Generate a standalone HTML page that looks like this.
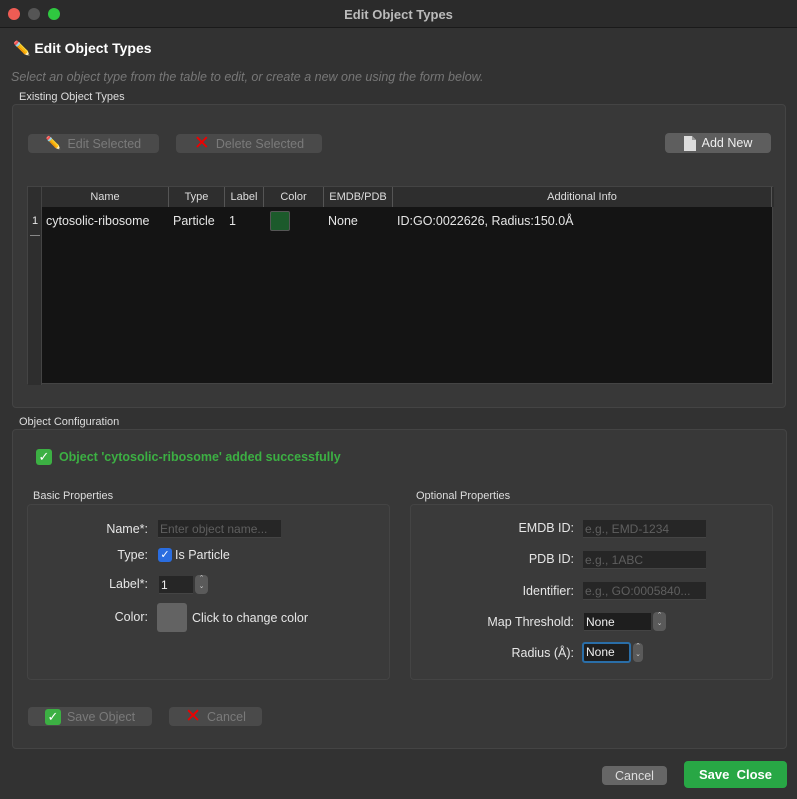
<!DOCTYPE html>
<html><head><meta charset="utf-8"><style>
*{box-sizing:border-box;margin:0;padding:0}
body{width:797px;height:799px;background:#323232;font-family:"Liberation Sans","DejaVu Sans",sans-serif;color:#e6e6e6;position:relative;overflow:hidden;font-size:12px}
.a{position:absolute}
.btn{position:absolute;background:#4a4a4a;border-radius:4px;color:#7a7a7a;font-size:12.5px;display:flex;align-items:center;justify-content:center;gap:6px}
.grp{position:absolute;background:#383838;border:1px solid #444;border-radius:4px}
.lbl{position:absolute;font-size:11px;color:#ddd}
.r{position:absolute;text-align:right;font-size:12.5px;color:#e6e6e6}
.in{position:absolute;background:#262626;border-bottom:1px solid #444;color:#5f5f5f;font-size:12px;padding-left:2px;line-height:18px;overflow:hidden;white-space:nowrap}
.sp{position:absolute;background:#5a5a5a;border-radius:4px;width:13px;height:19px;color:#ccc;font-size:7px;text-align:center;line-height:8px}
.th{position:absolute;top:0;height:20px;line-height:20px;text-align:center;font-size:11px;color:#ddd;border-right:1px solid #555}
.x{color:#e00;font-weight:bold;font-size:19px;line-height:14px}
.ck{display:inline-block;width:16px;height:16px;background:#3cb043;border-radius:3px;color:#fff;font-size:13px;line-height:16px;text-align:center;font-weight:bold}
</style></head><body>
<div class="a" style="left:0;top:0;width:797px;height:28px;background:#2b2b2b;border-bottom:1px solid #1a1a1a"></div>
<div class="a" style="left:8px;top:8px;width:12px;height:12px;border-radius:50%;background:#ee5c54"></div>
<div class="a" style="left:28px;top:8px;width:12px;height:12px;border-radius:50%;background:#555"></div>
<div class="a" style="left:48px;top:8px;width:12px;height:12px;border-radius:50%;background:#2fc840"></div>
<div class="a" style="left:0;width:797px;top:7px;text-align:center;font-size:13px;font-weight:bold;color:#bbb">Edit Object Types</div>
<div class="a" style="left:13px;top:40px;font-size:14px;font-weight:bold;color:#fff">✏️ Edit Object Types</div>
<div class="a" style="left:11px;top:70px;font-size:12.5px;font-style:italic;color:#777">Select an object type from the table to edit, or create a new one using the form below.</div>
<div class="lbl" style="left:19px;top:91px">Existing Object Types</div>
<div class="grp" style="left:12px;top:104px;width:774px;height:304px"></div>
<div class="btn" style="left:28px;top:134px;width:131px;height:19px"><span style="color:#c9a">✏️</span>Edit Selected</div>
<div class="btn" style="left:176px;top:134px;width:146px;height:19px"><span class="x">✕</span>Delete Selected</div>
<div class="btn" style="left:665px;top:133px;width:106px;height:20px;background:#5e5e5e;color:#eee"><svg width="12" height="15" viewBox="0 0 12 15"><path d="M0 0H8L12 4V15H0Z" fill="#ddd"/><path d="M8 0V4H12" fill="#999"/></svg>Add New</div>
<div class="a" style="left:27px;top:186px;width:746px;height:198px;background:#141414;border:1px solid #444">
 <div class="a" style="left:0;top:0;width:746px;height:20px;background:#2e2e2e"></div>
 <div class="a" style="left:0;top:0;width:14px;height:198px;background:#2e2e2e;border-right:1px solid #444"></div>
 <div class="th" style="left:14px;width:127px">Name</div>
 <div class="th" style="left:141px;width:56px">Type</div>
 <div class="th" style="left:197px;width:39px">Label</div>
 <div class="th" style="left:236px;width:60px">Color</div>
 <div class="th" style="left:296px;width:69px">EMDB/PDB</div>
 <div class="th" style="left:365px;width:379px">Additional Info</div>
 <div class="a" style="left:4px;top:28px;font-size:11px">1</div>
 <div class="a" style="left:2px;top:48px;width:10px;height:1px;background:#888"></div>
 <div class="a" style="left:18px;top:27px;font-size:12.5px">cytosolic-ribosome</div>
 <div class="a" style="left:145px;top:27px;font-size:12.5px">Particle</div>
 <div class="a" style="left:201px;top:27px;font-size:12.5px">1</div>
 <div class="a" style="left:242px;top:24px;width:20px;height:20px;background:#1c5a2b;border:1px solid #555;border-radius:2px"></div>
 <div class="a" style="left:300px;top:27px;font-size:12.5px">None</div>
 <div class="a" style="left:369px;top:27px;font-size:12.5px">ID:GO:0022626, Radius:150.0Å</div>
</div>
<div class="lbl" style="left:19px;top:416px">Object Configuration</div>
<div class="grp" style="left:12px;top:429px;width:775px;height:320px"></div>
<div class="a" style="left:36px;top:449px;font-size:12.5px;font-weight:bold;color:#3cb043"><span class="ck">✓</span>&nbsp; Object 'cytosolic-ribosome' added successfully</div>
<div class="lbl" style="left:33px;top:490px">Basic Properties</div>
<div class="grp" style="left:27px;top:504px;width:363px;height:176px;background:#3a3a3a"></div>
<div class="r" style="left:60px;width:88px;top:522px">Name*:</div>
<div class="in" style="left:158px;top:520px;width:123px;height:18px">Enter object name...</div>
<div class="r" style="left:60px;width:88px;top:548px">Type:</div>
<div class="a" style="left:158px;top:548px;width:14px;height:14px;background:#2a6de0;border-radius:3px;color:#fff;font-size:11px;text-align:center;line-height:14px">✓</div>
<div class="a" style="left:175px;top:548px;font-size:12.5px">Is Particle</div>
<div class="r" style="left:60px;width:88px;top:577px">Label*:</div>
<div class="in" style="left:159px;top:576px;width:34px;height:18px;color:#eee">1</div>
<div class="sp" style="left:195px;top:575px">⌃<br>⌄</div>
<div class="r" style="left:60px;width:88px;top:610px">Color:</div>
<div class="a" style="left:157px;top:603px;width:30px;height:29px;background:#636363;border-radius:3px"></div>
<div class="a" style="left:192px;top:611px;font-size:12.5px">Click to change color</div>
<div class="lbl" style="left:416px;top:490px">Optional Properties</div>
<div class="grp" style="left:410px;top:504px;width:363px;height:176px;background:#3a3a3a"></div>
<div class="r" style="left:450px;width:124px;top:521px">EMDB ID:</div>
<div class="in" style="left:583px;top:520px;width:123px;height:18px">e.g., EMD-1234</div>
<div class="r" style="left:450px;width:124px;top:552px">PDB ID:</div>
<div class="in" style="left:583px;top:551px;width:123px;height:18px">e.g., 1ABC</div>
<div class="r" style="left:450px;width:124px;top:584px">Identifier:</div>
<div class="in" style="left:583px;top:582px;width:123px;height:18px">e.g., GO:0005840...</div>
<div class="r" style="left:450px;width:124px;top:615px">Map Threshold:</div>
<div class="in" style="left:584px;top:613px;width:67px;height:18px;color:#eee;background:#1e1e1e">None</div>
<div class="sp" style="left:653px;top:612px">⌃<br>⌄</div>
<div class="r" style="left:450px;width:124px;top:646px">Radius (Å):</div>
<div class="in" style="left:582px;top:642px;width:49px;height:21px;color:#eee;background:#1e1e1e;border:2px solid #2a6ea8;border-radius:3px;line-height:17px">None</div>
<div class="sp" style="left:633px;top:643px;width:10px">⌃<br>⌄</div>
<div class="btn" style="left:28px;top:707px;width:124px;height:19px"><span class="ck">✓</span>Save Object</div>
<div class="btn" style="left:169px;top:707px;width:93px;height:19px"><span class="x">✕</span>Cancel</div>
<div class="btn" style="left:602px;top:766px;width:65px;height:19px;background:#666;color:#ddd">Cancel</div>
<div class="btn" style="left:684px;top:761px;width:103px;height:27px;background:#28a745;color:#fff;font-weight:bold;font-size:13px">Save &nbsp;Close</div>
</body></html>
